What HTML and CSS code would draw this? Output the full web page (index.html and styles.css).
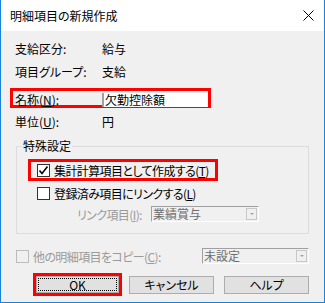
FILE: index.html
```html
<!DOCTYPE html>
<html lang="ja">
<head>
  <meta charset="UTF-8" />
  <title>明細項目の新規作成</title>
  <link rel="stylesheet" href="styles.css">
</head>
<body>
  <div class="window">
    <div class="titlebar">
      <span class="title">明細項目の新規作成</span>
      <svg class="close" width="11" height="11" viewBox="0 0 11 11">
        <path d="M0.5 0.5 L10.5 10.5 M10.5 0.5 L0.5 10.5" stroke="#000" stroke-width="1" fill="none"/>
      </svg>
    </div>

    <div class="content">
      <div class="row">
        <span class="label">支給区分:</span>
        <span>給与</span>
      </div>
      <div class="row gap">
        <span class="label">項目グループ:</span>
        <span>支給</span>
      </div>
      <div class="row mark-name">
        <span class="label">名称(<u>N</u>):</span>
        <input class="textbox" type="text" value="欠勤控除額">
      </div>
      <div class="row gap">
        <span class="label">単位(<u>U</u>):</span>
        <span>円</span>
      </div>

      <fieldset class="group">
        <legend>特殊設定</legend>
        <div class="mark-check">
          <span class="checkbox">
            <svg width="11" height="11" viewBox="0 0 11 11">
              <path d="M1.5 5.5 L4 8.5 L9.5 1.5" stroke="#000" stroke-width="1.6" fill="none"/>
            </svg>
          </span>
          <span class="tight">集計計算項目として作成する(<u>T</u>)</span>
        </div>
        <div class="check-row">
          <span class="checkbox"></span>
          <span class="tight">登録済み項目にリンクする(<u>L</u>)</span>
        </div>
        <div class="link-row">
          <span class="link-label disabled">リンク項目(<u>I</u>):</span>
          <div class="combo link-combo">
            <span class="combo-text">業績賞与</span>
            <span class="combo-btn"><span class="arrow"></span></span>
          </div>
        </div>
      </fieldset>

      <div class="copy-row">
        <div class="copy-check">
          <span class="checkbox off"></span>
          <span class="disabled tight">他の明細項目をコピー(<u>C</u>):</span>
        </div>
        <div class="combo copy-combo">
          <span class="combo-text">未設定</span>
          <span class="combo-btn"><span class="arrow"></span></span>
        </div>
      </div>

      <div class="buttons">
        <div class="mark-ok">
          <button class="btn ok"><span class="focus">OK</span></button>
        </div>
        <button class="btn cancel">キャンセル</button>
        <button class="btn help">ヘルプ</button>
      </div>
    </div>
  </div>
</body>
</html>
```

FILE: styles.css
```css
:root {
  --face: #f0f0f0;
  --frame: #1883d7;
  --mark: #ff0000;
  --btn: #e1e1e1;
  --btn-border: #adadad;
  --gray-text: #9a9a9a;
}

* {
  box-sizing: border-box;
}

body {
  margin: 0;
  font-family: "Noto Sans CJK JP", sans-serif;
  font-size: 12px;
  font-feature-settings: "palt";
  color: #000;
  background: #fff;
  white-space: nowrap;
}

u {
  text-decoration: underline;
  text-underline-offset: 1px;
}

.tight {
  letter-spacing: -0.6px;
}

.window {
  width: 325px;
  height: 303px;
  border: 1px solid var(--frame);
  border-top: none;
  background: var(--face);
  display: flex;
  flex-direction: column;
}

.titlebar {
  height: 31px;
  background: #fff;
  display: flex;
  align-items: center;
  justify-content: space-between;
  padding: 0 10px 0 9px;
}

.title {
  line-height: 18px;
}

.content {
  padding: 9px 14px 0;
}

.row {
  display: grid;
  grid-template-columns: 87px 1fr;
  align-items: center;
  height: 18px;
  line-height: 18px;
}

.row.gap {
  margin-top: 5px;
}

.mark-name {
  margin-top: 7px;
  margin-left: -5px;
  width: 201px;
  height: 20px;
  border: 3px solid var(--mark);
  padding-left: 2px;
}

.textbox {
  height: 14px;
  width: 100%;
  margin: 0;
  border: none;
  border-left: 2px solid #a0a0a0;
  background: #fff;
  font: inherit;
  font-feature-settings: "palt";
  padding: 0 0 0 1px;
  line-height: 14px;
  outline: none;
}

.group {
  margin: 6px 1px 0 1px;
  padding: 0 0 11px 5px;
  border: 1px solid #dcdcdc;
}

.group legend {
  padding: 0 1px;
  line-height: 18px;
}

.checkbox {
  width: 13px;
  height: 13px;
  flex: none;
  border: 1px solid #333;
  background: #fff;
  display: flex;
  align-items: center;
  justify-content: center;
}

.checkbox.off {
  border-color: #bcbcbc;
  background: var(--face);
}

.mark-check {
  margin: 4px 0 0 6px;
  width: 190px;
  height: 22px;
  border: 3px solid var(--mark);
  padding-left: 6px;
  display: flex;
  align-items: center;
  gap: 4px;
}

.check-row {
  margin-top: 4px;
  height: 16px;
  padding-left: 15px;
  display: flex;
  align-items: center;
  gap: 4px;
}

.link-row {
  margin-top: 5px;
  height: 16px;
  padding-left: 55px;
  display: flex;
  align-items: center;
}

.link-label {
  width: 74px;
  letter-spacing: -0.6px;
}

.disabled {
  color: var(--gray-text);
}

.combo {
  height: 16px;
  display: flex;
  align-items: center;
  justify-content: space-between;
  border-top: 1px solid #a0a0a0;
  border-left: 1px solid #a0a0a0;
  border-right: 1px solid #fff;
  border-bottom: 1px solid #fff;
  background: var(--face);
  padding: 0 1px;
}

.combo-text {
  color: #6d6d6d;
  line-height: 14px;
}

.combo-btn {
  width: 11px;
  height: 12px;
  border: 1px solid #c8c8c8;
  background: var(--face);
  display: flex;
  align-items: center;
  justify-content: center;
}

.arrow {
  width: 0;
  height: 0;
  border-left: 2px solid transparent;
  border-right: 2px solid transparent;
  border-top: 2px solid #a0a0a0;
}

.link-combo {
  width: 108px;
}

.copy-row {
  margin-top: 14px;
  height: 16px;
  display: flex;
  align-items: center;
  justify-content: space-between;
  padding: 0 1px;
}

.copy-check {
  display: flex;
  align-items: center;
  gap: 4px;
}

.copy-combo {
  width: 107px;
}

.buttons {
  margin-top: 9px;
  display: flex;
  align-items: center;
  justify-content: flex-end;
  padding-right: 1px;
}

.mark-ok {
  width: 89px;
  height: 23px;
  border: 3px solid var(--mark);
  display: flex;
  margin-right: 7px;
}

.btn {
  height: 18px;
  margin: 0;
  padding: 0;
  background: var(--btn);
  border: 1px solid var(--btn-border);
  font: inherit;
  font-feature-settings: "palt";
  color: #000;
  line-height: 16px;
}

.btn.ok {
  width: 100%;
  height: 100%;
  padding: 1px;
  display: flex;
}

.focus {
  flex: 1;
  border: 1px dotted #000;
  display: flex;
  align-items: center;
  justify-content: center;
}

.btn.cancel {
  width: 85px;
  margin-right: 10px;
}

.btn.help {
  width: 85px;
}
```
